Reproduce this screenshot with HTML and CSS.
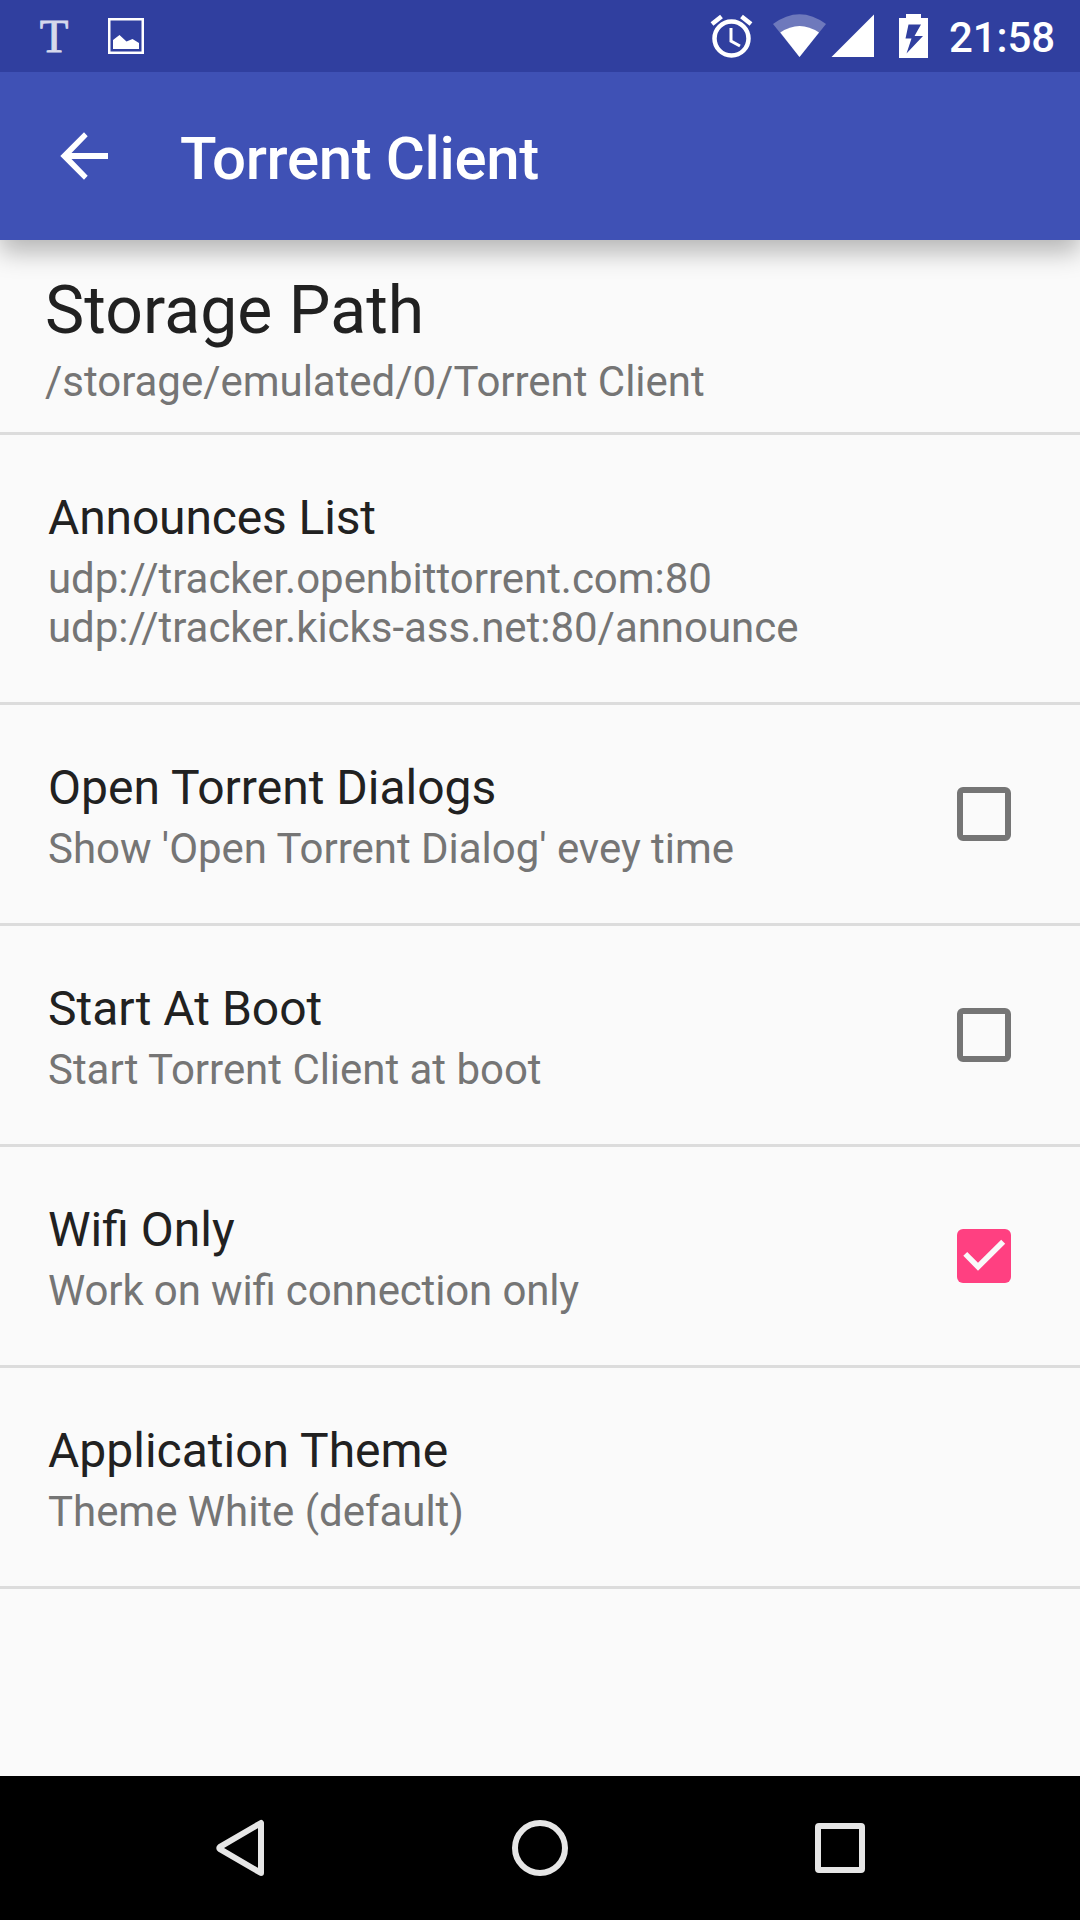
FILE: index.html
```html
<!DOCTYPE html>
<html lang="en">
<head>
<meta charset="utf-8">
<title>Torrent Client</title>
<link rel="stylesheet" href="styles.css">
</head>
<body>
<div class="screen">
  <header class="status-bar">
    <div class="notifications">
      <span class="text-notification">T</span>
      <svg class="image-icon" width="36" height="36" viewBox="0 0 36 36">
        <rect x="1.25" y="1.25" width="33.5" height="33.5" fill="none" stroke="#fff" stroke-width="2.5"/>
        <path d="M5 22l6.500-5 7 6.500 6-2.500 6.500 4v6H5z" fill="#fff"/>
      </svg>
    </div>
    <svg class="status-icons" width="220" height="72" viewBox="710 0 220 72">
      <g fill="none" stroke="#fff">
        <circle cx="731.500" cy="38.500" r="17" stroke-width="4.500"/>
        <path d="M731 28v13l9 5" stroke-width="3"/>
        <path d="M712 24l9.500-7.500M751 24l-9.500-7.500" stroke-width="4.500"/>
      </g>
      <path d="M773 24Q799.500 4.500 826 24L799.500 57z" fill="#fff" fill-opacity=".3"/>
      <path d="M780.300 32.500Q799.500 19.500 819 32.500L799.500 57z" fill="#fff"/>
      <path d="M831.500 57L874 14.500V57z" fill="#fff"/>
      <path fill="#fff" fill-rule="evenodd" d="M906 14h15v4h7v40h-29V18h7zM908.500 24.500L905.500 38.500H911.500L906.500 53.500L923 36H914.500L921 24.500z"/>
    </svg>
    <span class="clock">21:58</span>
  </header>
  <div class="app-bar">
    <svg width="48" height="48" viewBox="0 0 48 48"><path d="M48 21H11.500L27.700 4.300 24 .3 0.300 24 24 47.700l3.700-4L11.500 27H48z" fill="#fff"/></svg>
    <h1 class="app-title">Torrent Client</h1>
  </div>
  <main class="settings">
    <section class="storage">
      <h2 class="storage-title">Storage Path</h2>
      <p class="summary">/storage/emulated/0/Torrent Client</p>
    </section>
    <section class="row row-tall">
      <div class="label">
        <h2 class="title title-tight">Announces List</h2>
        <p class="summary">udp://tracker.openbittorrent.com:80<br>udp://tracker.kicks-ass.net:80/announce</p>
      </div>
    </section>
    <section class="row">
      <div class="label">
        <h2 class="title">Open Torrent Dialogs</h2>
        <p class="summary">Show 'Open Torrent Dialog' evey time</p>
      </div>
      <span class="checkbox"></span>
    </section>
    <section class="row">
      <div class="label">
        <h2 class="title">Start At Boot</h2>
        <p class="summary">Start Torrent Client at boot</p>
      </div>
      <span class="checkbox"></span>
    </section>
    <section class="row">
      <div class="label">
        <h2 class="title">Wifi Only</h2>
        <p class="summary summary-tight">Work on wifi connection only</p>
      </div>
      <svg width="54" height="54" viewBox="0 0 54 54"><rect width="54" height="54" rx="6" fill="#ff4081"/><path d="M6.300 26.800L10.200 22.900 21 33.700 44.200 10.700 48.200 14.700 21 41.800z" fill="#fafafa"/></svg>
    </section>
    <section class="row">
      <div class="label">
        <h2 class="title">Application Theme</h2>
        <p class="summary">Theme White (default)</p>
      </div>
    </section>
  </main>
  <nav class="nav-bar">
    <svg width="60" height="60" viewBox="0 0 60 60"><path d="M51 5V55L10 31.200Q8.500 30 10 28.800z"/></svg>
    <svg width="60" height="60" viewBox="0 0 60 60"><circle cx="30" cy="30" r="25"/></svg>
    <svg width="60" height="60" viewBox="0 0 60 60"><rect x="8" y="8" width="44" height="44" rx="1"/></svg>
  </nav>
</div>
</body>
</html>
```
FILE: styles.css
```css
* { box-sizing: border-box; }
body { margin: 0; font-family: Roboto, sans-serif; color: #212121; }
h1, h2, p { margin: 0; font-weight: 400; }
svg { display: block; flex: none; }
.screen { width: 1080px; height: 1920px; display: flex; flex-direction: column; background: #fafafa; overflow: hidden; }
.status-bar { height: 72px; flex: none; display: flex; align-items: center; padding: 0 25px 0 39px; background: #303f9f; color: #fff; z-index: 2; }
.notifications { display: flex; align-items: center; gap: 39px; margin-right: auto; }
.text-notification { width: 30px; font: 47px/70px "Liberation Serif", serif; text-align: center; color: #d6d9ec; -webkit-text-stroke: .8px #d6d9ec; }
.clock { margin-left: 19px; font-size: 42px; font-weight: 500; line-height: 72px; padding-top: 3px; letter-spacing: -.1px; }
.app-bar { height: 168px; flex: none; display: flex; align-items: center; gap: 72px; padding-left: 60px; background: #3f51b5; color: #fff; box-shadow: 0 12px 24px rgba(0, 0, 0, .28); z-index: 1; }
.app-title { font-size: 60px; font-weight: 500; line-height: 70px; padding-top: 5px; letter-spacing: -.38px; }
.settings { flex: 1; }
.storage { height: 195px; padding: 32px 45px 0; border-bottom: 3px solid #dcdcdc; }
.storage-title { font-size: 66px; line-height: 77px; margin-bottom: 8px; letter-spacing: .08px; }
.row { height: 221px; display: flex; align-items: center; padding: 0 69px 0 48px; border-bottom: 3px solid #dcdcdc; }
.row-tall { height: 270px; }
.label { flex: 1; align-self: flex-start; padding-top: 55px; }
.title { font-size: 48px; line-height: 56px; margin-bottom: 8px; }
.title-tight { letter-spacing: -.15px; }
.summary { font-size: 42px; line-height: 49px; color: #757575; letter-spacing: -.03px; }
.summary-tight { letter-spacing: -.14px; font-feature-settings: "liga" 1; }
.checkbox { width: 54px; height: 54px; border: 6px solid #757575; border-radius: 6px; }
.nav-bar { height: 144px; flex: none; display: flex; align-items: center; justify-content: center; gap: 240px; background: #000; }
.nav-bar svg { fill: none; stroke: #e6e6e6; stroke-width: 6; stroke-linejoin: round; }
```
